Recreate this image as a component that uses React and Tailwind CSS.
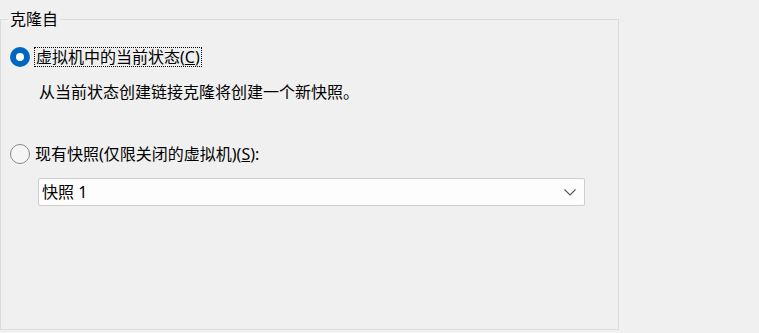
import { useState } from "react";

function Radio({ checked }) {
  return checked ? (
    <span className="w-[20px] h-[20px] rounded-full bg-[#0067c0] flex items-center justify-center shrink-0">
      <span className="w-[8px] h-[8px] rounded-full bg-white" />
    </span>
  ) : (
    <span className="w-[20px] h-[20px] rounded-full border border-[#8a8a8a] bg-[#f5f5f5] shrink-0" />
  );
}

export default function App() {
  const [source, setSource] = useState("current");

  return (
    <div
      className="w-[759px] h-[333px] bg-[#f0f0f0] text-black text-[16px] leading-[20px] overflow-hidden"
      style={{ fontFamily: '"Noto Sans", "Noto Sans CJK SC", sans-serif' }}
    >
      {/* 分组框 */}
      <fieldset className="w-[619px] h-[322px] mt-[8px] border border-[#dcdcdc] p-0 m-0">
        <legend className="ml-[7px] px-[2px] leading-[22px]">克隆自</legend>

        <div className="pl-[9px] pt-[17px]">
          <label
            className="flex items-center gap-[4px] cursor-default"
            onClick={() => setSource("current")}
          >
            <Radio checked={source === "current"} />
            <span className="border border-dotted border-black px-[1px] leading-[18px]">
              虚拟机中的当前状态(<span className="underline">C</span>)
            </span>
          </label>

          <p className="ml-[29px] mt-[15px]">从当前状态创建链接克隆将创建一个新快照。</p>

          <label
            className="flex items-center gap-[5px] mt-[42px] cursor-default"
            onClick={() => setSource("snapshot")}
          >
            <Radio checked={source === "snapshot"} />
            <span>
              现有快照(仅限关闭的虚拟机)(<span className="underline">S</span>):
            </span>
          </label>

          <div className="ml-[28px] mt-[14px] w-[547px] h-[28px] bg-[#fdfdfd] border border-[#cfcfcf] rounded-[2px] flex items-center justify-between pl-[3px] pr-[8px]">
            <span>快照 1</span>
            <svg width="12" height="7" viewBox="0 0 12 7" fill="none">
              <path d="M0.5 0.5 L6 6 L11.5 0.5" stroke="#555" strokeWidth="1.1" />
            </svg>
          </div>
        </div>
      </fieldset>
    </div>
  );
}
